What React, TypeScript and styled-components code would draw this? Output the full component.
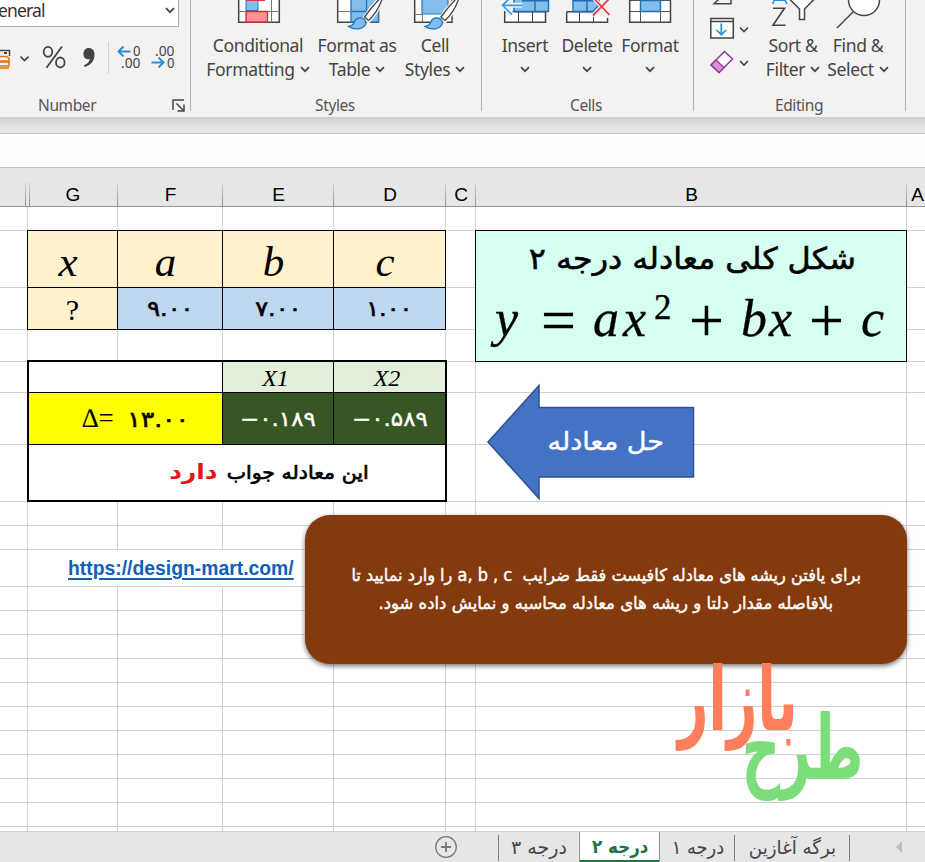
import React from 'react';
import styled, { createGlobalStyle, css } from 'styled-components';

const Global = createGlobalStyle`
  * { box-sizing: border-box; }
  html, body { margin: 0; padding: 0; }
  body { width: 925px; height: 862px; overflow: hidden; background: #fff; }
`;

const persian = `'DejaVu Sans', sans-serif`;

const Window = styled.div`
  width: 925px;
  height: 862px;
  display: flex;
  flex-direction: column;
  overflow: hidden;
  font-family: 'Noto Sans', sans-serif;
`;

/* ---------- ribbon ---------- */

const Ribbon = styled.div`
  height: 117px;
  flex: none;
  display: flex;
  background: #f3f2f1;
  color: #444;
`;

const Group = styled.div<{ $w: number }>`
  width: ${(p) => p.$w}px;
  height: 111px;
  flex: none;
  display: flex;
  flex-direction: column;
  border-right: 1px solid #b3b0ad;
`;

const GroupBody = styled.div<{ $pad?: number }>`
  height: 94px;
  flex: none;
  display: flex;
  padding-left: ${(p) => p.$pad ?? 0}px;
`;

const GroupFooter = styled.div<{ $shift?: number }>`
  height: 22px;
  line-height: 22px;
  flex: none;
  display: flex;
  justify-content: center;
  align-items: center;
  font-size: 15.5px;
  letter-spacing: -0.4px;
  color: #555;
  padding-right: ${(p) => p.$shift ?? 0}px;
`;

const BigButton = styled.div<{ $w: number }>`
  width: ${(p) => p.$w}px;
  display: flex;
  flex-direction: column;
  align-items: center;
  svg { flex: none; display: block; }
`;

const Caption = styled.div`
  height: 24px;
  line-height: 24px;
  display: flex;
  align-items: center;
  gap: 5px;
  white-space: nowrap;
  font-size: 17.5px;
  letter-spacing: -0.35px;
`;

const IconGap = styled.div`
  height: 1px;
  flex: none;
`;

const Chevron = () => (
  <svg width="10" height="8" viewBox="0 0 10 8" fill="none" stroke="#444" strokeWidth="1.700">
    <path d="M1 2.200 5 6.200 9 2.200" />
  </svg>
);

const NumberBody = styled.div`
  height: 94px;
  width: 190px;
  flex: none;
  display: flex;
  flex-direction: column;
`;

const FormatSelect = styled.div`
  width: 179px;
  height: 27px;
  display: flex;
  justify-content: space-between;
  align-items: center;
  padding: 0 3px 6px 0;
  border: solid #ababab;
  border-width: 0 1px 1px 0;
  background: #fff;
  font-size: 17.5px;
  letter-spacing: -0.85px;
  color: #333;
  span { margin-left: -2px; }
`;

const NumberTools = styled.div`
  height: 64px;
  width: 190px;
  svg { display: block; font-family: 'Noto Sans', sans-serif; }
`;

const Launcher = styled.div`
  width: 13px;
  height: 13px;
  margin-left: 76px;
  svg { display: block; }
`;

const NumberFooter = styled(GroupFooter)`
  justify-content: flex-start;
  padding-left: 38px;
`;

const SmallTools = styled.div`
  width: 70px;
  svg { display: block; }
`;

const Art = ({ x, w, h = 32, children }: { x: number; w: number; h?: number; children: React.ReactNode }) => (
  <svg width={w} height={h} viewBox={`${x} 0 ${w} ${h}`} fill="none">
    {children}
  </svg>
);

/* Paint brush shared by the two style buttons; its tip sits at the given x. */
const Brush = ({ x }: { x: number }) => (
  <g transform={`translate(${x} 0)`}>
    <path d="M32-2C27 3 21 10 16 18l4 3C26 15 31 7 33-1z" fill="#fff" stroke="#f3f2f1" strokeWidth="4" />
    <path d="M32-2C27 3 21 10 16 17l4 3.500C26 15 31 7 34-2z" fill="#fff" stroke="#444" strokeWidth="1.300" />
    <path d="M0 26.500c4-.5 5-2 6-5 1.500-4 8-5 10.500-1.500 2.500 4-1 8-6 8.800C6.500 29.300 3 28.500 0 26.500z" fill="#83bdec" stroke="#1e78c0" strokeWidth="1.300" />
  </g>
);

const RibbonBar = () => (
  <Ribbon>
    <Group $w={191}>
      <NumberBody>
        <FormatSelect>
          <span>eneral</span>
          <Chevron />
        </FormatSelect>
        <NumberTools>
          <svg width="190" height="64" viewBox="0 27 190 64" fill="none">
            <path d="M-2 50.500H9.500V56" stroke="#444" strokeWidth="1.500" />
            <path d="M4 53h3" stroke="#444" strokeWidth="2" />
            <path d="M-2 56.500h8q4 1 3 4.500h-11M-2 62h11v4h-11M-2 68h11" stroke="#e8720c" strokeWidth="1.600" />
            <path d="M20.500 56.500l4 4 4-4" stroke="#444" strokeWidth="1.700" />
            <g stroke="#444" strokeWidth="1.800">
              <ellipse cx="48" cy="51.800" rx="4.300" ry="5" />
              <ellipse cx="60.300" cy="62.500" rx="4.300" ry="5" />
              <path d="M62 46.500 46.500 67.800" />
            </g>
            <path d="M88.500 48c4 0 6 2.700 6 6.800 0 6.500-4 10.500-10 12.200l-.6-1.600c3.600-1.400 5.500-3.500 5.700-6.300-3.600.8-6.200-1.600-6.200-5.100 0-3.400 2.200-6 5.100-6z" fill="#444" />
            <path d="M108.500 42v32" stroke="#d2d0ce" />
            <g fill="#444" fontSize="15">
              <text x="133" y="55.500" textLength="7.500" lengthAdjust="spacingAndGlyphs">0</text>
              <text x="121" y="68" textLength="19.500" lengthAdjust="spacingAndGlyphs">.00</text>
              <text x="155" y="55.500" textLength="19.500" lengthAdjust="spacingAndGlyphs">.00</text>
              <text x="167" y="68" textLength="7.500" lengthAdjust="spacingAndGlyphs">0</text>
            </g>
            <path d="M130.500 51.500H118.500M123.500 46.500l-5 5 5 5M151.500 62.500H163.500M158.500 57.500l5 5-5 5" stroke="#2a8dd4" strokeWidth="1.900" />
          </svg>
        </NumberTools>
      </NumberBody>
      <NumberFooter>
        Number
        <Launcher>
          <svg width="13" height="13" viewBox="0 0 13 13" fill="none" stroke="#444" strokeWidth="1.500">
            <path d="M1 11V1h11M4.500 4.500l7 7M12 5.500V12H5.500" />
          </svg>
        </Launcher>
      </NumberFooter>
    </Group>

    <Group $w={291}>
      <GroupBody $pad={12}>
        <BigButton $w={110}>
          <Art x={203} w={110}>
            <path d="M238.700-2V22.300H279.300V-2z" fill="#fff" stroke="#444" strokeWidth="1.500" />
            <path d="M239 11.500h40M271.500 0v22M246.500 0v22" stroke="#777" />
            <path d="M246-2h12V10.500H246z" fill="#83bdec" stroke="#1e78c0" />
            <path d="M246 .5H265" stroke="#e03a3e" />
            <path d="M246 11.500H267.500V22H246z" fill="#ff9095" stroke="#e0282e" strokeWidth="1.300" />
          </Art>
          <IconGap />
          <Caption>Conditional</Caption>
          <Caption>Formatting <Chevron /></Caption>
        </BigButton>
        <BigButton $w={88}>
          <Art x={313} w={88}>
            <path d="M337.700-2V22.300H378.500V-2z" fill="#fff" stroke="#444" strokeWidth="1.500" />
            <path d="M351-2V22H378.500V-2z" fill="#83bdec" stroke="#1e78c0" strokeWidth="1.300" />
            <path d="M338 11.500h13" stroke="#777" />
            <path d="M351 11.500h28M366.500 0v22" stroke="#1e78c0" strokeWidth="1.300" />
            <Brush x={348.500} />
          </Art>
          <IconGap />
          <Caption>Format as</Caption>
          <Caption>Table <Chevron /></Caption>
        </BigButton>
        <BigButton $w={68}>
          <Art x={401} w={68}>
            <path d="M414.700-2V22.300H452V-2z" fill="#fff" stroke="#444" strokeWidth="1.500" />
            <path d="M415 14.500h8M422.500 14v8" stroke="#777" />
            <path d="M422-2V14H448V-2z" fill="#83bdec" stroke="#1e78c0" strokeWidth="1.200" />
            <Brush x={425} />
          </Art>
          <IconGap />
          <Caption>Cell</Caption>
          <Caption>Styles <Chevron /></Caption>
        </BigButton>
      </GroupBody>
      <GroupFooter $shift={2}>Styles</GroupFooter>
    </Group>

    <Group $w={212}>
      <GroupBody $pad={12}>
        <BigButton $w={62}>
          <Art x={494} w={62}>
            <path d="M504.700 11.700V22.300H545.500V11.700z" fill="#fff" stroke="#444" strokeWidth="1.500" />
            <path d="M518.500 12v10M532.500 12v10" stroke="#444" />
            <path d="M514-2V11.500H548.500V-2z" fill="#83bdec" stroke="#1e6fb5" strokeWidth="1.400" />
            <path d="M535 0v11M522 .8h27" stroke="#1e6fb5" strokeWidth="1.400" />
            <path d="M522 5.300H503M512-4l-9.500 9.300 9.500 9.300" stroke="#f3f2f1" strokeWidth="5" />
            <path d="M522 5.300H503M512-4l-9.500 9.300 9.500 9.300" stroke="#3d9be0" strokeWidth="1.700" />
          </Art>
          <IconGap />
          <Caption>Insert</Caption>
          <Caption><Chevron /></Caption>
        </BigButton>
        <BigButton $w={62}>
          <Art x={556} w={62}>
            <path d="M566.700 11.700V22.300H607.500V18M566.700 11.700h30" fill="#fff" stroke="#444" strokeWidth="1.500" />
            <path d="M579.500 12v10M593.500 17v5" stroke="#444" />
            <path d="M573-2V11.500H593L599 5V-2z" fill="#83bdec" stroke="#1e6fb5" strokeWidth="1.400" />
            <path d="M587 0v11M573 .8h23" stroke="#1e6fb5" strokeWidth="1.400" />
            <path d="M593 15.500 612-4M593-2.500 609.500 15" stroke="#f3f2f1" strokeWidth="4" />
            <path d="M593 15.500 612-4M593-2.500 609.500 15" stroke="#e34348" strokeWidth="1.800" />
          </Art>
          <IconGap />
          <Caption>Delete</Caption>
          <Caption><Chevron /></Caption>
        </BigButton>
        <BigButton $w={64}>
          <Art x={618} w={64}>
            <path d="M629.700-2V22.300H670.500V-2z" fill="#fff" stroke="#444" strokeWidth="1.500" />
            <path d="M630 .5h41M630 11.500h41M640.500 0v22M660.500 0v22" stroke="#555" />
            <path d="M640.500 .5V11.500H660.500V.5z" fill="#83bdec" stroke="#1e6fb5" strokeWidth="1.400" />
          </Art>
          <IconGap />
          <Caption>Format</Caption>
          <Caption><Chevron /></Caption>
        </BigButton>
      </GroupBody>
      <GroupFooter $shift={3}>Cells</GroupFooter>
    </Group>

    <Group $w={212}>
      <GroupBody>
        <SmallTools>
          <Art x={694} w={70} h={80}>
            <path d="M720-2 714 3.800H731V0" stroke="#444" strokeWidth="1.500" />
            <path d="M710.800 18.500H733.300V38H710.800zM711 21.500h22" fill="#fff" stroke="#444" strokeWidth="1.500" />
            <path d="M721.300 23.500v11M716.500 30l4.800 4.800L726 30" stroke="#2a8dd4" strokeWidth="1.700" />
            <path d="M724.500 51.500 732.500 59 719 72.500 711 65z" fill="#fff" stroke="#8d3c96" strokeWidth="1.500" />
            <path d="M716 60 724 67.500 719 72.500 711 65z" fill="#dc8fd8" stroke="#8d3c96" strokeWidth="1.300" />
            <path d="M740 27.500l4 4 4-4M740 61l4 4 4-4" stroke="#444" strokeWidth="1.700" />
          </Art>
        </SmallTools>
        <BigButton $w={58}>
          <Art x={764} w={58}>
            <path d="M772.500 4 774.500 0M785 0L787 4M774.500 .3H785" stroke="#2a8dd4" strokeWidth="1.600" />
            <path d="M773 8.300H784.500L773 25.200H785.500" stroke="#444" strokeWidth="1.600" />
            <path d="M789.500-1 799.500 9V19.500H804.500V9L814.500-1" fill="#fff" stroke="#444" strokeWidth="1.500" />
          </Art>
          <IconGap />
          <Caption>Sort &amp;</Caption>
          <Caption>Filter <Chevron /></Caption>
        </BigButton>
        <BigButton $w={72}>
          <Art x={822} w={72}>
            <circle cx="864" cy="0" r="15.500" fill="#fff" stroke="#444" strokeWidth="1.500" />
            <path d="M853.500 11.500 837 28" stroke="#444" strokeWidth="1.500" />
          </Art>
          <IconGap />
          <Caption>Find &amp;</Caption>
          <Caption>Select <Chevron /></Caption>
        </BigButton>
      </GroupBody>
      <GroupFooter $shift={1}>Editing</GroupFooter>
    </Group>
  </Ribbon>
);

const RibbonShadow = styled.div`
  height: 17px;
  flex: none;
  background: linear-gradient(#cdcdcd, #e3e3e3 9px, #e6e6e6);
  border-bottom: 1px solid #c6c6c6;
`;

const FormulaBar = styled.div`
  height: 34px;
  flex: none;
  background: #fdfdfd;
  border-bottom: 1px solid #c6c6c6;
`;

/* ---------- sheet ---------- */

const COLS = [28, 90, 105, 111, 112, 30, 431, 24];
const ROWS = [24, 57, 42, 32, 31, 52, 57, 24, 24, 37, 24, 24, 24, 24, 24, 24, 24, 24, 24, 24, 5];

const HeaderRow = styled.div`
  height: 39px;
  flex: none;
  display: grid;
  grid-template-columns: ${COLS.map((c) => `${c}px`).join(' ')};
  background: #e6e6e6;
  border-bottom: 1px solid #999;
  padding-top: 15px;
`;

const HeaderCell = styled.div<{ $edge?: boolean }>`
  display: flex;
  justify-content: center;
  align-items: center;
  padding: 1px 0 0 1px;
  font: 19px/22px 'Liberation Sans', sans-serif;
  color: #000;
  border-right: 1px solid transparent;
  border-image: linear-gradient(#d4d4d4, #8e8e8e) 1;
  border-image-width: 0 1px 0 0;
  &:last-child { padding-left: 0; padding-right: 2px; }
  ${(p) =>
    p.$edge &&
    css`
      margin-right: -2px;
      background: linear-gradient(#d4d4d4, #8e8e8e) 25px 0 / 1px 100% no-repeat;
    `}
`;

const Sheet = styled.div`
  position: relative;
  height: 624px;
  flex: none;
  display: grid;
  grid-template-columns: ${COLS.map((c) => `${c}px`).join(' ')};
  grid-template-rows: ${ROWS.map((r) => `${r}px`).join(' ')};
  background: #fff;
`;

const Cell = styled.div<{ $r: number; $c: number; $open?: boolean }>`
  grid-area: ${(p) => `${p.$r} / ${p.$c}`};
  border-right: 1px solid ${(p) => (p.$open ? 'transparent' : '#d0d0d0')};
  border-bottom: 1px solid #d0d0d0;
`;

const Table = styled.div<{ $area: string; $cols: string; $rows: string; $heavy?: boolean }>`
  grid-area: ${(p) => p.$area};
  margin: -1px 0 0 -1px;
  display: grid;
  grid-template-columns: ${(p) => p.$cols};
  grid-template-rows: ${(p) => p.$rows};
  gap: 1px;
  padding: 1px;
  background: #000;
  ${(p) =>
    p.$heavy &&
    css`
      margin: -2px -1px 0 -1px;
      padding: 2px;
    `}
`;

const Box = styled.div<{ $bg: string; $color?: string; $span?: number; $gap?: number; $left?: number }>`
  display: flex;
  justify-content: center;
  align-items: center;
  min-width: 0;
  white-space: nowrap;
  gap: ${(p) => p.$gap ?? 0}px;
  padding-left: ${(p) => p.$left ?? 0}px;
  background: ${(p) => p.$bg};
  color: ${(p) => p.$color ?? '#000'};
  grid-column: span ${(p) => p.$span ?? 1};
`;

const Letter = styled.span<{ $size: number; $dx?: number; $dy?: number; $italic?: boolean }>`
  font: ${(p) => (p.$italic ? 'italic' : 'normal')} ${(p) => p.$size}px/1 'Liberation Serif', serif;
  padding: ${(p) => p.$dy ?? 0}px ${(p) => p.$dx ?? 0}px 0 0;
`;

const Fa = styled.span<{ $size: number; $sx?: number; $bold?: boolean; $color?: string; $ls?: number; $down?: number; $ink?: number; $rtl?: boolean }>`
  display: inline-flex;
  justify-content: center;
  align-items: center;
  direction: ${(p) => (p.$rtl ? 'rtl' : 'ltr')};
  white-space: pre;
  font-family: ${persian};
  font-size: ${(p) => p.$size}px;
  font-weight: ${(p) => (p.$bold ? 700 : 400)};
  line-height: 1.2;
  letter-spacing: ${(p) => p.$ls ?? 0}px;
  color: ${(p) => p.$color ?? 'inherit'};
  -webkit-text-stroke: ${(p) => p.$ink ?? 0}px currentColor;
  transform: scaleX(${(p) => p.$sx ?? 1});
  padding-top: ${(p) => p.$down ?? 0}px;
`;

const FormulaCard = styled.div`
  grid-area: 2 / 7 / 5 / 8;
  margin: -1px 0 0 -1px;
  border: 1px solid #000;
  background: #d5fff1;
  display: flex;
  flex-direction: column;
  align-items: center;
`;

const CardTitle = styled.div`
  height: 56px;
  display: flex;
  align-items: center;
  padding-left: 3px;
`;

const Formula = styled.div`
  display: flex;
  align-items: baseline;
  width: 392px;
  height: 66px;
  font: italic 52px/64px 'Liberation Serif', serif;
  -webkit-text-stroke: 0.3px currentColor;
  color: #000;
`;

const Term = styled.span<{ $w: number; $up?: boolean; $op?: boolean }>`
  width: ${(p) => p.$w}px;
  flex: none;
  ${(p) => p.$op && `font-style: normal; font-size: 62px; line-height: 40px; transform: translate(-1px, 5px);`}
  ${(p) => p.$up && `font-style: normal; font-size: 35px; line-height: 1; align-self: flex-start; padding-top: 3px;`}
`;

const LinkCell = styled.div`
  grid-area: 10 / 2 / 11 / 5;
  display: flex;
  align-items: center;
  padding: 0 0 1px 40px;
  a {
    font: bold 19.35px/22px 'Liberation Sans', sans-serif;
    color: #1160b7;
    text-decoration: underline;
    text-underline-offset: 3px;
    text-decoration-thickness: 1.5px;
  }
`;

const ArrowShape = styled.div`
  position: absolute;
  left: 486px;
  top: 175px;
  width: 210px;
  height: 120px;
  display: grid;
  place-items: center;
  > * { grid-area: 1 / 1; }
  svg { display: block; }
`;

const ArrowLabel = styled.div`
  padding-left: 30px;
  color: #fff;
`;

const Note = styled.div`
  position: absolute;
  left: 305px;
  top: 308px;
  width: 602px;
  height: 149px;
  border-radius: 25px;
  background: #843a0c;
  box-shadow: 0 2px 5px rgba(0, 0, 0, 0.55);
  color: #fff;
  display: flex;
  flex-direction: column;
  align-items: center;
  padding-top: 46px;
`;

const NoteLine = styled.div`
  height: 28px;
  display: flex;
  align-items: center;
`;

const Brand = styled.div`
  position: absolute;
  left: 670px;
  top: 457px;
  width: 200px;
  height: 150px;
  svg { display: block; overflow: visible; font-family: ${persian}; font-weight: 700; }
`;

/* ---------- tabs ---------- */

const TabBar = styled.div`
  height: 31px;
  flex: none;
  display: flex;
  background: #e6e6e6;
`;

const TabPart = styled.div<{ $w: number; $line?: boolean; $active?: boolean; $pad?: number }>`
  width: ${(p) => p.$w}px;
  height: 31px;
  flex: none;
  display: flex;
  justify-content: center;
  align-items: center;
  padding-left: ${(p) => p.$pad ?? 0}px;
  border-top: 1px solid #8f8f8f;
  color: #444;
  ${(p) => p.$line && `background: linear-gradient(#808080, #808080) right 3px / 1px 26px no-repeat;`}
  ${(p) =>
    p.$active &&
    css`
      background: #fff;
      border: solid #8f8f8f;
      border-width: 0 1px 0 1px;
      box-shadow: inset 0 -2px 0 #217346;
      color: #217346;
    `}
`;

const Tabs = () => (
  <TabBar>
    <TabPart $w={499} $line $pad={393}>
      <svg width="24" height="24" viewBox="0 0 24 24" fill="none" stroke="#777">
        <circle cx="12" cy="12" r="10.300" strokeWidth="1.200" />
        <path d="M12 7v10M7 12h10" strokeWidth="1.800" />
      </svg>
    </TabPart>
    <TabPart $w={80}><Fa $rtl $size={19}>درجه ۳</Fa></TabPart>
    <TabPart $w={81} $active $pad={2}><Fa $rtl $bold $size={18.5} $sx={0.9} $down={2}>درجه ۲</Fa></TabPart>
    <TabPart $w={75} $line><Fa $rtl $size={19} $sx={0.94}>درجه ۱</Fa></TabPart>
    <TabPart $w={115} $line><Fa $rtl $size={19} $sx={0.96}>برگه آغازین</Fa></TabPart>
    <TabPart $w={75} $pad={24}>
      <svg width="7" height="12" viewBox="0 0 7 12"><path d="M6 0v12L0 6z" fill="#bdbdbd" /></svg>
    </TabPart>
  </TabBar>
);

const LETTERS = ['', 'G', 'F', 'E', 'D', 'C', 'B', 'A'];
const COEFFICIENTS = ['۹.۰۰', '۷.۰۰', '۱.۰۰'];
const ROOTS = ['−۰.۱۸۹', '−۰.۵۸۹'];

export default function App() {
  return (
    <>
      <Global />
      <Window>
        <RibbonBar />
        <RibbonShadow />
        <FormulaBar />
        <HeaderRow>
          {LETTERS.map((l, i) => (
            <HeaderCell key={i} $edge={i === 0}>{l}</HeaderCell>
          ))}
        </HeaderRow>
        <Sheet>
          {ROWS.flatMap((_, r) =>
            COLS.map((__, c) => <Cell key={`${r}-${c}`} $r={r + 1} $c={c + 1} $open={r === 9 && c >= 1 && c <= 3} />),
          )}

          <Table $area="2 / 2 / 4 / 6" $cols="89px 104px 110px 111px" $rows="56px 41px">
            {['x', 'a', 'b', 'c'].map((name) => (
              <Box key={name} $bg="#fff2cc"><Letter $italic $size={43} $dx={9} $dy={5}>{name}</Letter></Box>
            ))}
            <Box $bg="#fff2cc"><Letter $size={30} $dy={2}>?</Letter></Box>
            {COEFFICIENTS.map((n) => (
              <Box key={n} $bg="#bdd7ee"><Fa $size={21} $ink={0.6} $ls={2} $sx={1.14} $down={3}>{n}</Fa></Box>
            ))}
          </Table>

          <FormulaCard>
            <CardTitle><Fa $rtl $size={30} $sx={1.06} $ink={0.6}>شکل کلی معادله درجه ۲</Fa></CardTitle>
            <Formula>
              <Term $w={47}>y</Term>
              <Term $w={51} $op>=</Term>
              <Term $w={30}>a</Term>
              <Term $w={31}>x</Term>
              <Term $w={36} $up>2</Term>
              <Term $w={51} $op>+</Term>
              <Term $w={28}>b</Term>
              <Term $w={41}>x</Term>
              <Term $w={51} $op>+</Term>
              <Term $w={26}>c</Term>
            </Formula>
          </FormulaCard>

          <Table $heavy $area="5 / 2 / 8 / 6" $cols="193px 110px 111px" $rows="30px 51px 55px">
            <Box $bg="#fff" />
            <Box $bg="#e2efda"><Letter $italic $size={24} $dx={5} $dy={2}>X1</Letter></Box>
            <Box $bg="#e2efda"><Letter $italic $size={24} $dx={5} $dy={2}>X2</Letter></Box>
            <Box $bg="#ffff00" $left={16}>
              <Letter $size={27} $dx={17}>∆=</Letter>
              <Fa $size={22} $ink={0.6} $ls={2} $sx={1.14} $down={3}>۱۳.۰۰</Fa>
            </Box>
            {ROOTS.map((n) => (
              <Box key={n} $bg="#375623" $color="#fff"><Fa $size={20.5} $ls={1.5} $ink={0.4} $sx={1.12} $down={2}>{n}</Fa></Box>
            ))}
            <Box $bg="#fff" $span={3} $gap={18} $left={63}>
              <Fa $rtl $size={21} $sx={1.18} $bold $color="#e8141c">دارد</Fa>
              <Fa $rtl $size={19} $sx={1.08} $ink={0.7}>این معادله جواب</Fa>
            </Box>
          </Table>

          <LinkCell><a>https://design-mart.com/</a></LinkCell>

          <ArrowShape>
            <svg width="210" height="120" viewBox="0 0 210 120">
              <path d="M2 60 53 3.500V25.500H207.500V95H53V116.500z" fill="#4472c4" stroke="#2f528f" strokeWidth="1.500" />
            </svg>
            <ArrowLabel><Fa $rtl $size={25} $sx={1.085} $ink={0.4}>حل معادله</Fa></ArrowLabel>
          </ArrowShape>

          <Note>
            <NoteLine><Fa $rtl $size={17} $sx={0.95} $ink={0.45}>برای یافتن ریشه های معادله کافیست فقط ضرایب  a, b , c را وارد نمایید تا</Fa></NoteLine>
            <NoteLine><Fa $rtl $size={17} $sx={0.968} $ink={0.45}>بلافاصله مقدار دلتا و ریشه های معادله محاسبه و نمایش داده شود.</Fa></NoteLine>
          </Note>

          <Brand>
            <svg width="200" height="150" viewBox="0 0 200 150">
              <text transform="translate(127.500 66) scale(1.025 1.690)" textAnchor="end" direction="ltr" fontSize="52" fill="#ff7f5c">بازار</text>
              <text transform="translate(193.500 114.500) scale(1.025 1.720)" textAnchor="end" direction="ltr" fontSize="52" fill="#7bde7b">طرح</text>
            </svg>
          </Brand>
        </Sheet>
        <Tabs />
      </Window>
    </>
  );
}
